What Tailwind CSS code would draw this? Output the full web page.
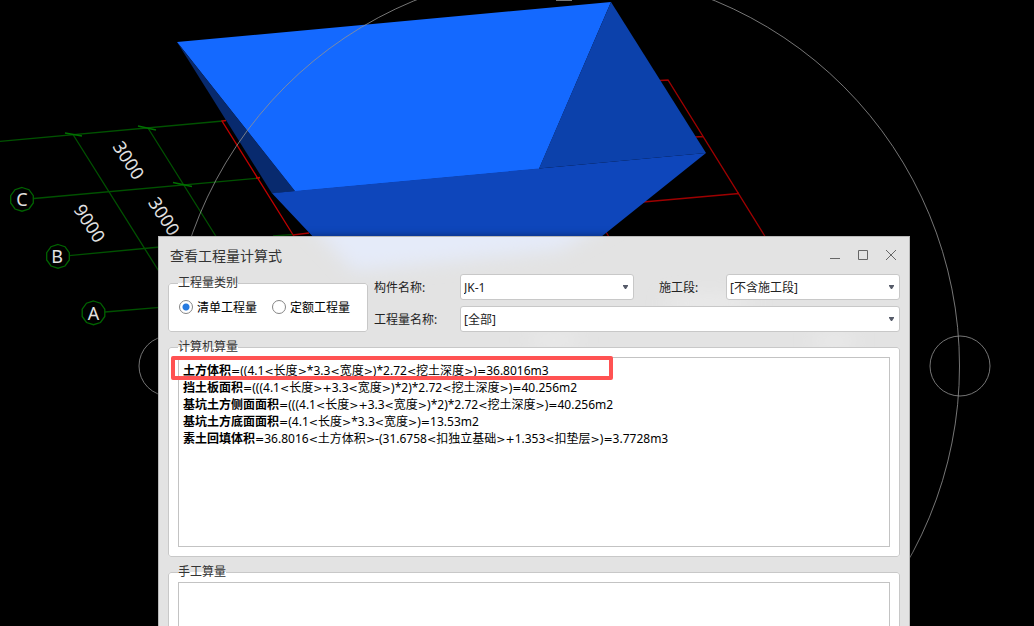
<!DOCTYPE html>
<html lang="zh-CN">
<head>
<meta charset="utf-8">
<meta name="viewport" content="width=device-width, initial-scale=1">
<title>查看工程量计算式</title>
<script src="https://cdn.jsdelivr.net/npm/@tailwindcss/browser@4"></script>
</head>
<body class="relative h-screen overflow-hidden bg-black font-['Noto_Sans','Noto_Sans_CJK_SC',sans-serif] text-xs text-[#222]">

<!-- 3D viewport -->
<svg class="absolute inset-0 h-full w-full" viewBox="0 0 1034 626" preserveAspectRatio="xMinYMin slice" fill="none" aria-label="三维视图">
  <!-- axis grid -->
  <g stroke="#005200" stroke-width="1.3">
    <path d="M0 141.300L223 121M34 198.500L260 178M69 255.600L160 247M105 312L160 307.300"/>
    <path d="M73 134.500L160 273M148 128L217 238M273 236L293 234.500"/>
    <path stroke="#007000" d="M65 133L82 136M138 126L156 130M173 182.500L192 186.500"/>
    <path id="bubble" stroke="#006400" d="M22 187.500L29 189.700L33.300 195.700L33.300 203L29 209L22 211.200L15 209L10.700 203L10.700 195.700L15 189.700Z"/>
    <use href="#bubble" x="36" y="57" stroke="#006400"/>
    <use href="#bubble" x="71.500" y="113.500" stroke="#006400"/>
  </g>
  <g fill="#e2e2e2" font-size="18" text-anchor="middle">
    <text x="22" y="206">C</text>
    <text x="57" y="263">B</text>
    <text x="93.500" y="320">A</text>
    <text transform="translate(129 160) rotate(57)" y="7">3000</text>
    <text transform="translate(164.500 216) rotate(57)" y="7">3000</text>
    <text transform="translate(90 223) rotate(57)" y="7">9000</text>
  </g>
  <g stroke="#c00000" stroke-width="1.300">
    <path d="M226 120.500L222 121L295 238M256 178L260 177.500M293 235L309 233"/>
    <path stroke="#9e0000" d="M660 80.500L668 80L766 238M695 137L703 136.500M643 202L739 193.500M606 232L609 237"/>
  </g>
  <!-- pit solid -->
  <path fill="#1469ff" d="M177 42L611 2L539 169L295 191.500Z"/>
  <path fill="#082a6e" d="M177 42L295 191L272 193.500Z"/>
  <path fill="#0c41ab" d="M611 2L706 153L539 168.500Z"/>
  <path fill="#0e46bb" d="M272 193.300L295 191L539 168.500L706 153L596 241L317 241Z"/>
  <!-- orbit rings -->
  <g stroke="#929292" stroke-opacity=".8" stroke-width="1">
    <circle cx="564.500" cy="366" r="395"/>
    <circle cx="960" cy="366" r="30"/>
    <circle cx="169" cy="366" r="30"/>
    <path stroke-width="2" d="M556 0H572"/>
  </g>
</svg>

<!-- dialog window -->
<main class="absolute top-[236px] right-[124px] bottom-0 left-[158px] overflow-hidden border border-b-0 border-[#b9b9b9] bg-[#e3e3e3] shadow-[0_0_8px_#00000066]">
  <svg class="absolute top-0 left-0 h-32 w-full" viewBox="0 0 750 128" preserveAspectRatio="none" aria-hidden="true">
    <defs><filter id="soft" x="-20%" y="-50%" width="140%" height="200%"><feGaussianBlur stdDeviation="9"/></filter></defs>
    <path filter="url(#soft)" fill="#e5ebf9" d="M145 -20H460L400 13L195 34Z"/>
    <g filter="url(#soft)" fill="#ebebeb">
      <ellipse cx="395" cy="103" rx="26" ry="7"/>
      <ellipse cx="550" cy="66" rx="45" ry="8"/>
      <ellipse cx="675" cy="104" rx="22" ry="7"/>
    </g>
  </svg>

  <div class="relative flex h-full flex-col px-[9px]">
    <header class="flex h-[37px] shrink-0 items-center justify-between pr-[3px] pl-[2px]">
      <h1 class="text-sm text-[#333]">查看工程量计算式</h1>
      <div class="flex gap-4 pb-[2px] text-[#666]">
        <button type="button" aria-label="最小化"><svg class="size-3" viewBox="0 0 12 12" fill="none" stroke="currentColor"><path d="M1 9.500H11"/></svg></button>
        <button type="button" aria-label="最大化"><svg class="size-3" viewBox="0 0 12 12" fill="none" stroke="currentColor"><path d="M1.500 1.500H10.500V10.500H1.500Z"/></svg></button>
        <button type="button" aria-label="关闭"><svg class="size-3" viewBox="0 0 12 12" fill="none" stroke="currentColor"><path d="M1 1L11 11M11 1L1 11"/></svg></button>
      </div>
    </header>

    <div class="flex shrink-0 gap-[6px]">
      <fieldset class="mt-px h-[57px] w-[200px] rounded-[3px] border border-[#c8c8c8] bg-white">
        <legend class="ml-[9px] pb-[2px] leading-[15px] text-[#333]">工程量类别</legend>
        <div class="flex h-[30px] items-center gap-[15px] pl-[10px] text-black">
          <label class="flex items-center gap-1"><input type="radio" name="kind" checked class="size-[14px] appearance-none rounded-full border border-[#858585] bg-white bg-[radial-gradient(circle,#2579df_3px,transparent_4px)]"><span class="pt-px">清单工程量</span></label>
          <label class="flex items-center gap-1"><input type="radio" name="kind" class="size-[14px] appearance-none rounded-full border border-[#858585] bg-white"><span class="pt-px">定额工程量</span></label>
        </div>
      </fieldset>

      <div class="flex flex-1 flex-col gap-[6px]">
        <div class="flex items-center">
          <label for="part" class="w-[86px] pt-[2px]">构件名称:</label>
          <div class="relative flex-1">
            <select id="part" class="block h-[26px] w-full appearance-none rounded-[3px] border border-[#c8c8c8] bg-white pt-[2px] pl-[3px]"><option>JK-1</option></select>
            <svg class="pointer-events-none absolute top-[11px] right-[6px] h-1 w-[5px]" viewBox="0 0 5 4" fill="#555a68" aria-hidden="true"><path d="M0 0H5V1L3 4H2L0 1Z"/></svg>
          </div>
          <label for="stage" class="ml-[25px] w-[67px] pt-[2px]">施工段:</label>
          <div class="relative flex-1">
            <select id="stage" class="block h-[26px] w-full appearance-none rounded-[3px] border border-[#c8c8c8] bg-white pt-[2px] pl-[3px]"><option>[不含施工段]</option></select>
            <svg class="pointer-events-none absolute top-[11px] right-[6px] h-1 w-[5px]" viewBox="0 0 5 4" fill="#555a68" aria-hidden="true"><path d="M0 0H5V1L3 4H2L0 1Z"/></svg>
          </div>
        </div>
        <div class="flex items-center">
          <label for="quantity" class="w-[86px] pt-[2px]">工程量名称:</label>
          <div class="relative flex-1">
            <select id="quantity" class="block h-[26px] w-full appearance-none rounded-[3px] border border-[#c8c8c8] bg-white pt-[2px] pl-[3px]"><option>[全部]</option></select>
            <svg class="pointer-events-none absolute top-[11px] right-[6px] h-1 w-[5px]" viewBox="0 0 5 4" fill="#555a68" aria-hidden="true"><path d="M0 0H5V1L3 4H2L0 1Z"/></svg>
          </div>
        </div>
      </div>
    </div>

    <fieldset class="mt-[7px] shrink-0 rounded-[3px] border border-[#c8c8c8] bg-white px-[9px] pt-px pb-[9px]">
      <legend class="pb-[2px] leading-[15px] text-[#333]">计算机算量</legend>
      <!-- operators are set in a wider face than the digits -->
      <div class="relative h-[190px] border border-[#c3c3c3] px-1 pt-1 leading-[17px] whitespace-nowrap text-black [&_i]:font-['DejaVu_Sans',sans-serif] [&_i]:text-[11px] [&_i]:leading-none [&_i]:not-italic">
        <p class="h-[17px]"><b>土方体积</b><i>=</i>((4.1<i>&lt;</i>长度<i>&gt;</i>*3.3<i>&lt;</i>宽度<i>&gt;</i>)*2.72<i>&lt;</i>挖土深度<i>&gt;</i>)<i>=</i>36.8016m3</p>
        <p class="h-[17px]"><b>挡土板面积</b><i>=</i>(((4.1<i>&lt;</i>长度<i>&gt;+</i>3.3<i>&lt;</i>宽度<i>&gt;</i>)*2)*2.72<i>&lt;</i>挖土深度<i>&gt;</i>)<i>=</i>40.256m2</p>
        <p class="h-[17px]"><b>基坑土方侧面面积</b><i>=</i>(((4.1<i>&lt;</i>长度<i>&gt;+</i>3.3<i>&lt;</i>宽度<i>&gt;</i>)*2)*2.72<i>&lt;</i>挖土深度<i>&gt;</i>)<i>=</i>40.256m2</p>
        <p class="h-[17px]"><b>基坑土方底面面积</b><i>=</i>(4.1<i>&lt;</i>长度<i>&gt;</i>*3.3<i>&lt;</i>宽度<i>&gt;</i>)<i>=</i>13.53m2</p>
        <p class="h-[17px]"><b>素土回填体积</b><i>=</i>36.8016<i>&lt;</i>土方体积<i>&gt;</i>-(31.6758<i>&lt;</i>扣独立基础<i>&gt;+</i>1.353<i>&lt;</i>扣垫层<i>&gt;</i>)<i>=</i>3.7728m3</p>
        <div class="pointer-events-none absolute -top-[2px] -left-2 h-6 w-[442px] rounded-xs border-4 border-[#ff5252]"></div>
      </div>
    </fieldset>

    <fieldset class="mt-[7px] shrink-0 rounded-[3px] border border-[#c8c8c8] bg-white px-[9px] pt-px pb-[9px]">
      <legend class="pb-[2px] leading-[15px] text-[#333]">手工算量</legend>
      <div class="h-[190px] border border-[#c3c3c3]"></div>
    </fieldset>
  </div>
</main>
</body>
</html>
